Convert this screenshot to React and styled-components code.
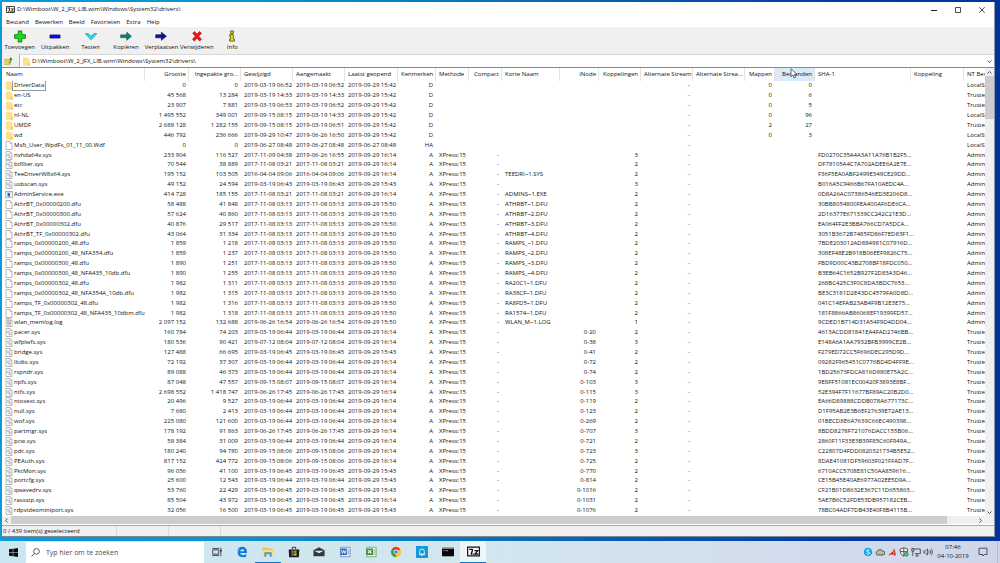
import styled, { createGlobalStyle, css } from 'styled-components';
import { useState } from 'react';

const GlobalStyle = createGlobalStyle`
  * {
    box-sizing: border-box;
  }
  body {
    margin: 0;
    font-family: 'Open Sans', 'Noto Sans', sans-serif;
    font-size: 6px;
    line-height: 9px;
    color: #111;
  }
  button,
  input {
    font: inherit;
    color: inherit;
    border: none;
    background: none;
    padding: 0;
    margin: 0;
  }
`;

const Desktop = styled.div`
  height: 100vh;
  display: flex;
  flex-direction: column;
  background: linear-gradient(90deg, #0a9adb 0%, #0a92d2 25%, #0768b8 55%, #0338a2 85%, #02329c 100%);
`;

const Window = styled.main`
  flex: 1;
  min-height: 0;
  margin: 2px 5px 4px 2px;
  display: flex;
  flex-direction: column;
  background: #fff;
  border-right: 1px solid #8d99ad;
  border-bottom: 1px solid #7d8a94;
`;

const TitleBar = styled.header`
  height: 15px;
  display: flex;
  align-items: center;
  padding-left: 4px;
`;

const Title = styled.h1`
  flex: 1;
  margin: 0;
  padding-left: 2px;
  font-size: 6px;
  font-weight: 400;
`;

const WindowButton = styled.button`
  width: 24px;
  height: 15px;
  display: flex;
  align-items: center;
  justify-content: center;
`;

const MenuBar = styled.nav`
  height: 10px;
  display: flex;
  gap: 6px;
  padding-left: 4px;
`;

const ToolBar = styled.div`
  height: 26px;
  flex-shrink: 0;
  background: #f0f0f0;
`;

const Tools = styled.div`
  max-width: 248px;
  height: 100%;
  display: grid;
  grid-template-columns: repeat(7, minmax(0, 1fr));
`;

const ToolButton = styled.button`
  display: flex;
  flex-direction: column;
  align-items: center;
  padding-top: 3px;
  white-space: nowrap;
`;

const AddressBar = styled.div`
  height: 15px;
  flex-shrink: 0;
  display: flex;
  align-items: stretch;
  padding-top: 1px;
  background: #f0f0f0;
  border-bottom: 1px solid #8a8a8a;
`;

const UpButton = styled.button`
  width: 17px;
  display: flex;
  align-items: center;
  padding-left: 2px;
`;

const AddressBox = styled.label`
  flex: 1;
  display: flex;
  align-items: center;
  gap: 2px;
  padding: 0 2px;
  background: #fff;
  border-left: 1px solid #b4b4b4;
  border-top: 1px solid #d8d8d8;
`;

const AddressInput = styled.input`
  flex: 1;
  min-width: 0;
  outline: none;
`;

const Content = styled.div`
  flex: 1;
  min-height: 0;
  display: flex;
`;

const ListPane = styled.div`
  flex: 1;
  min-width: 0;
  overflow: hidden;
`;

const FileTable = styled.table`
  width: 100%;
  height: 100%;
  table-layout: fixed;
  border-collapse: separate;
  border-spacing: 0;
`;

const Col = styled.col`
  width: ${({ $width }) => ($width ? `${$width}px` : 'auto')};
`;

const cell = css`
  padding: 0 3px;
  white-space: nowrap;
  font-weight: 400;
  text-align: ${({ $right }) => ($right ? 'right' : 'left')};
`;

const HeadCell = styled.th`
  ${cell}
  position: relative;
  height: 13px;
  padding: 0 2px 0 3px;
  border-right: 1px solid #e4e4e4;
  background: ${({ $hot }) => ($hot ? '#d9ebf9' : '#fff')};
  &:first-child {
    padding-left: 4px;
  }
  &:last-child {
    border-right: none;
    padding-right: 0;
  }
`;

const Cell = styled.td`
  ${cell}
  &:last-child {
    padding-right: 0;
  }
`;

const NameCell = styled.div`
  display: flex;
  align-items: center;
  svg {
    flex-shrink: 0;
  }
`;

const FileName = styled.span`
  padding: 0 1px;
  outline: ${({ $focused }) => ($focused ? '1px solid #9a9a9a' : 'none')};
`;

const Pointer = styled.svg`
  position: absolute;
  left: 15px;
  top: 0;
`;

const VScroll = styled.div`
  width: 9px;
  display: flex;
  flex-direction: column;
  background: #f0f0f0;
`;

const HScroll = styled.div`
  height: 8px;
  flex-shrink: 0;
  display: flex;
  background: #f0f0f0;
  padding-right: 9px;
`;

const ScrollButton = styled.button`
  width: 9px;
  height: 8px;
  display: flex;
  align-items: center;
  justify-content: center;
`;

const Track = styled.div`
  flex: 1;
`;

const VThumb = styled.div`
  height: 10%;
  background: #cdcdcd;
`;

const HThumb = styled.div`
  width: 97%;
  height: 100%;
  background: #cdcdcd;
`;

const StatusBar = styled.footer`
  height: 11px;
  flex-shrink: 0;
  display: flex;
  align-items: center;
  margin-top: 1px;
  background: #f0f0f0;
  border-top: 1px solid #a8a8ae;
`;

const StatusCell = styled.span`
  width: ${({ $wide }) => ($wide ? '115px' : '52px')};
  height: 100%;
  padding: 1px;
  border-right: 1px solid #dcdcdc;
  white-space: nowrap;
`;

const TaskBar = styled.footer`
  height: 22px;
  flex-shrink: 0;
  display: flex;
  background: linear-gradient(90deg, #cbe7f1 0%, #d3e6ef 50%, #d2dcec 80%, #d0d6e9 100%);
`;

const StartButton = styled.button`
  width: 26px;
  display: flex;
  align-items: center;
  justify-content: center;
`;

const SearchBox = styled.label`
  width: 178px;
  margin-top: 1px;
  display: flex;
  align-items: center;
  gap: 6px;
  padding-left: 5px;
  background: #fff;
`;

const SearchInput = styled.input`
  flex: 1;
  min-width: 0;
  font-size: 7px;
  outline: none;
  &::placeholder {
    color: #4c4c4c;
    opacity: 1;
  }
`;

const Apps = styled.div`
  width: 282px;
  display: grid;
  grid-template-columns: repeat(11, minmax(0, 1fr));
`;

const AppButton = styled.button`
  display: flex;
  align-items: center;
  justify-content: center;
  background: ${({ $active }) => ($active ? '#edf6f9' : 'none')};
  border-bottom: 1px solid ${({ $running }) => ($running ? '#0a78d0' : 'transparent')};
`;

const Tray = styled.div`
  margin-left: auto;
  display: flex;
  align-items: center;
  gap: 2px;
`;

const TrayButton = styled.button`
  display: flex;
`;

const Clock = styled.time`
  width: 36px;
  text-align: center;
`;

const NotificationButton = styled.button`
  width: 25px;
  height: 100%;
  display: flex;
  align-items: center;
  padding-left: 5px;
  border-right: 1px solid #b4bccb;
  margin-right: 2px;
`;

const menus = ['Bestand', 'Bewerken', 'Beeld', 'Favorieten', 'Extra', 'Help'];

const columns = [
  { label: 'Naam', width: 143 },
  { label: 'Grootte', width: 44, right: true },
  { label: 'Ingepakte gro...', width: 52, right: true },
  { label: 'Gewijzigd', width: 52 },
  { label: 'Aangemaakt', width: 52 },
  { label: 'Laatst geopend', width: 53 },
  { label: 'Kenmerken', width: 38, right: true },
  { label: 'Methode', width: 33 },
  { label: 'Compact', width: 33, right: true },
  { label: 'Korte Naam', width: 58 },
  { label: 'iNode', width: 39, right: true },
  { label: 'Koppelingen', width: 42, right: true },
  { label: 'Alternate Stream', width: 52, right: true },
  { label: 'Alternate Strea...', width: 52, right: true },
  { label: 'Mappen', width: 30, right: true },
  { label: 'Bestanden', width: 40, right: true, hot: true },
  { label: 'SHA-1', width: 96 },
  { label: 'Koppeling', width: 53 },
  { label: 'NT Bev' },
];

const folder = (name, size, packed, modified, created, dirs, files, owner) => ({
  icon: 'folder',
  name,
  cells: [size, packed, modified, created, '2019-09-29 15:42', 'D', '', '', '', '', '', '-', '', dirs, files, '', '', owner],
});

const file = (icon, name, size, packed, modified, created, accessed, short, inode, links, sha, owner = 'Trusted') => ({
  icon,
  name,
  cells: [size, packed, modified, created, `2019-09-29 ${accessed}`, 'A', 'XPress:15', '-', short, inode, links, '-', '', '', '', `${sha}...`, '', owner],
});

const dfu = (name, size, packed, short, sha) =>
  file('doc', name, size, packed, '2017-11-08 03:13', '2017-11-08 03:13', '15:50', short, '', '2', sha, 'Admin');

const sys = (name, size, packed, date, accessed, inode, links, sha) =>
  file('sys', name, size, packed, date, date, accessed, '', inode, links, sha);

const rows = [
  folder('DriverData', '0', '0', '2019-03-19 06:52', '2019-03-19 06:52', '0', '0', 'LocalS'),
  folder('en-US', '45 568', '13 284', '2019-03-19 14:33', '2019-03-19 14:33', '0', '6', 'Trusted'),
  folder('etc', '23 907', '7 881', '2019-03-19 06:53', '2019-03-19 06:52', '0', '5', 'Trusted'),
  folder('nl-NL', '1 495 552', '349 001', '2019-09-15 08:15', '2019-03-19 14:33', '0', '96', 'LocalS'),
  folder('UMDF', '2 688 128', '1 282 155', '2019-09-15 08:15', '2019-03-19 06:51', '2', '27', 'Trusted'),
  folder('wd', '446 792', '236 666', '2019-09-29 10:47', '2019-06-26 16:50', '0', '3', 'LocalS'),
  {
    icon: 'doc',
    name: 'Msft_User_WpdFs_01_11_00.Wdf',
    cells: ['0', '0', '2019-06-27 08:48', '2019-06-27 08:48', '2019-06-27 08:48', 'HA', '', '', '', '', '', '-', '', '', '', '', '', 'LocalS'],
  },
  file('sys', 'nvhda64v.sys', '233 904', '116 527', '2017-11-09 04:38', '2019-06-26 16:55', '16:14', '', '', '3', 'FD0270C35A4A3A11A76B1B2F5', 'Admin'),
  file('sys', 'btfilter.sys', '70 544', '38 889', '2017-11-08 03:21', '2017-11-08 03:21', '16:14', '', '', '2', 'DF78105A4C7A702ADEE6A2E7E', 'Admin'),
  file('sys', 'TeeDriverW8x64.sys', '195 152', '103 505', '2016-04-04 09:06', '2016-04-04 09:06', '16:14', 'TEEDRI~1.SYS', '', '2', 'F36F5EA0ABF2499E349CE29DD', 'Admin'),
  file('sys', 'usbscan.sys', '49 152', '24 594', '2019-03-19 06:43', '2019-03-19 06:43', '15:43', '', '', '3', 'B016A5C9466B67FA10AEDC4A', 'Admin'),
  file('exe', 'AdminService.exe', '414 728', '185 155', '2017-11-08 03:21', '2017-11-08 03:21', '16:14', 'ADMINS~1.EXE', '', '2', '0D8A26AC07386546ED3E206D8', 'Admin'),
  dfu('AthrBT_0x00000200.dfu', '58 488', '41 848', 'ATHRBT~1.DFU', '30BB8054800FEA400AF6DE6CA'),
  dfu('AthrBT_0x00000300.dfu', '57 624', '40 860', 'ATHRBT~2.DFU', '2D16377E671339CC242C21E3D'),
  dfu('AthrBT_0x00000302.dfu', '40 876', '29 517', 'ATHRBT~3.DFU', 'EA064FF2E3BBA766CD7A5DCA'),
  dfu('AthrBT_TF_0x00000302.dfu', '43 064', '31 334', 'ATHRBT~4.DFU', '3051B3672B7485FD86F7ED83F1'),
  dfu('ramps_0x00000200_48.dfu', '1 859', '1 218', 'RAMPS_~1.DFU', '7BDE203012AD884981C07916D'),
  dfu('ramps_0x00000200_48_NFA354.dfu', '1 859', '1 237', 'RAMPS_~2.DFU', '308EF48E2B918B06EEF9826C75'),
  dfu('ramps_0x00000300_48.dfu', '1 890', '1 251', 'RAMPS_~3.DFU', 'FBD9D00C43B2708BF18FDC050'),
  dfu('ramps_0x00000300_48_NFA435_10db.dfu', '1 890', '1 255', 'RAMPS_~4.DFU', 'B3EB64C1652B927F2D83A3D46'),
  dfu('ramps_0x00000302_48.dfu', '1 982', '1 311', 'RA20C1~1.DFU', '268BC425C3F0C8DA3BDC7653'),
  dfu('ramps_0x00000302_48_NFA354A_10db.dfu', '1 982', '1 315', 'RA38CF~1.DFU', 'BE3C3181D2E43DC4579FA0D8D'),
  dfu('ramps_TF_0x00000302_48.dfu', '1 982', '1 316', 'RA8FD5~1.DFU', '041C14EFAB23AB4F9B12E3E75'),
  dfu('ramps_TF_0x00000302_48_NFA435_10dbm.dfu', '1 982', '1 318', 'RA1574~1.DFU', '181F8866AB86068EF19399FD57'),
  file('log', 'wlan_memlog.log', '2 097 152', '132 688', '2019-06-26 16:54', '2019-06-26 16:54', '15:50', 'WLAN_M~1.LOG', '', '1', '9CDED1B714D31A54F9D4DD04', 'Admin'),
  sys('pacer.sys', '160 784', '74 203', '2019-03-19 06:44', '16:14', '0-20', '2', '4613ACDD81841EA4FAD2746BB'),
  sys('wfplwfs.sys', '180 536', '90 421', '2019-07-12 08:04', '16:14', '0-38', '3', 'E148A6A1AA7932BFB3999CE2B'),
  sys('bridge.sys', '127 488', '66 695', '2019-03-19 06:45', '15:43', '0-41', '2', 'F279ED72CC5F696DEC295D9D'),
  sys('lltdio.sys', '72 192', '37 307', '2019-03-19 06:44', '16:14', '0-72', '2', '09282F965451C0776BD4D4FF9E'),
  sys('rspndr.sys', '89 088', '46 373', '2019-03-19 06:44', '16:14', '0-74', '2', '1BD25673FDCA816D980E75A2C'),
  sys('npfs.sys', '87 048', '47 557', '2019-09-15 08:07', '16:14', '0-103', '3', '9E8FF51081EC00420F3893E8BF'),
  sys('ntfs.sys', '2 698 552', '1 418 747', '2019-06-26 17:45', '16:14', '0-115', '3', '52E394F7F11677BF89AC20B2D0'),
  sys('ntosext.sys', '20 496', '9 527', '2019-03-19 06:44', '16:14', '0-119', '2', 'EA66D89888CDDB078A677173C'),
  sys('null.sys', '7 680', '2 413', '2019-03-19 06:44', '16:14', '0-123', '2', 'D1F95AB2E3B6EF27639E72AE13'),
  sys('wof.sys', '225 080', '121 600', '2019-03-19 06:44', '16:14', '0-269', '2', '01BECD8E6A7639C66EC490398'),
  sys('partmgr.sys', '178 192', '91 863', '2019-06-26 17:45', '16:14', '0-707', '3', '8BDD8278F721076DACC155B06'),
  sys('pcw.sys', '58 384', '31 009', '2019-03-19 06:44', '16:14', '0-721', '2', '2860F11F33E3B39F85C60F949A'),
  sys('pdc.sys', '180 240', '94 780', '2019-09-15 08:06', '16:14', '0-723', '3', 'C22807D4FDD0820321734B5E52'),
  sys('PEAuth.sys', '817 152', '424 772', '2019-09-15 08:06', '16:14', '0-725', '2', '8DAE41081DF59603F021FFAD7F'),
  sys('PktMon.sys', '96 056', '41 100', '2019-03-19 06:45', '15:43', '0-770', '2', '6710ACC5708E81C50AA859616'),
  sys('portcfg.sys', '25 600', '12 543', '2019-03-19 06:44', '15:43', '0-814', '2', 'CE15B45E40AE6977A02EE5D9A'),
  sys('qwavedrv.sys', '53 760', '22 429', '2019-03-19 06:45', '15:43', '0-1016', '2', 'CF21B01D8632E367C11D655863'),
  sys('rassstp.sys', '85 504', '43 972', '2019-03-19 06:45', '16:14', '0-1031', '2', '5AE7B6C52FDE53DB957182CEB'),
  sys('rdpvideominiport.sys', '32 056', '16 500', '2019-03-19 06:45', '15:43', '0-1076', '2', '78BC04ADF7DB43E40F8B4115B'),
];

const Page = ({ children }) => (
  <svg width="8" height="9" viewBox="0 0 8 9" aria-hidden="true">
    <path d="M1 .5h4l2 2v6H1z" fill="#fff" stroke="#9c9c9c" strokeWidth=".7" />
    <path d="M5 .5v2h2" fill="none" stroke="#9c9c9c" strokeWidth=".6" />
    {children}
  </svg>
);

const FileIcon = ({ type }) => {
  if (type === 'folder') {
    return (
      <svg width="8" height="9" viewBox="0 0 8 9" aria-hidden="true">
        <path d="M1 .4h4.200l.6 1h1.700v7.300H1z" fill="#ffe08a" />
        <path d="M5.500 6.200l2.400-.8v3.300H5.500z" fill="#f7cf62" />
      </svg>
    );
  }
  if (type === 'exe') {
    return (
      <svg width="8" height="9" viewBox="0 0 8 9" aria-hidden="true">
        <path d="M.4 1.6h7.2v6H.4z" fill="#f5f8fb" stroke="#8e99a5" strokeWidth=".7" />
        <path d="M.4 1.3h7.2v1H.4z" fill="#a0abb8" />
        <path d="M2.5 3h2.6v3.6H2.5z" fill="#1576d2" />
      </svg>
    );
  }
  if (type === 'log') {
    return (
      <Page>
        <path d="M2 3h4M2 4.3h4M2 5.6h4M2 7h4M2 2h2" stroke="#8a8a8a" strokeWidth=".7" />
      </Page>
    );
  }
  if (type === 'sys') {
    return (
      <Page>
        <circle cx="3.300" cy="4" r="1.200" fill="#d6e6ef" stroke="#8fabbc" strokeWidth=".6" />
        <circle cx="5" cy="6" r="1.200" fill="#d6e6ef" stroke="#9db3c0" strokeWidth=".6" />
      </Page>
    );
  }
  return <Page />;
};

const SevenZip = ({ width, height }) => (
  <svg width={width} height={height} viewBox="0 0 14 11" aria-hidden="true">
    <path d="M.7.7h12.6v9.6H.7z" fill="#fff" stroke="#111" strokeWidth="1.300" />
    <path d="M2.300 3.200h3.500v1.300L4.300 9" fill="none" stroke="#111" strokeWidth="1.500" />
    <path d="M8 4.500h3.500L8.500 8.200h3.600" fill="none" stroke="#111" strokeWidth="1.400" />
    <path d="M6 7.500h1.300v1.500H6z" fill="#111" />
  </svg>
);

const tools = [
  {
    label: 'Toevoegen',
    art: <path d="M6.200 1h3.600v3.700h3.700v3.600H9.800V12H6.200V8.300H2.500V4.700h3.700z" fill="#18e018" stroke="#0a7a12" strokeWidth=".9" />,
  },
  { label: 'Uitpakken', art: <path d="M3 5h10v3H3z" fill="#1010f0" stroke="#00007c" strokeWidth=".8" /> },
  {
    label: 'Testen',
    art: <path d="M2.500 3.700h3L8 6.300l3-2.600h2.800L8 9.800z" fill="#27dfea" stroke="#0d8f98" strokeWidth=".7" />,
  },
  {
    label: 'Kopiëren',
    art: (
      <g fill="#0c8280" stroke="#064a4a" strokeWidth=".6">
        <path d="M2.700 4.800h1v3h-1zM4.500 4.800h1v3h-1zM6.400 4.800h2.400V2.300l4.600 4-4.600 4V7.800H6.400z" />
      </g>
    ),
  },
  {
    label: 'Verplaatsen',
    art: <path d="M2.700 4.800h5.700V2.300l5 4-5 4V7.800H2.700z" fill="#10109a" stroke="#000050" strokeWidth=".6" />,
  },
  {
    label: 'Verwijderen',
    art: (
      <path
        d="M3.700 3.200l1.800-1.700L8 4.200l2.500-2.700 2 1.700-2.800 3 2.800 3.100-1.900 1.800L8 8.300l-2.600 2.800-1.900-1.800 2.800-3.100z"
        fill="#f01414"
        stroke="#9a0808"
        strokeWidth=".6"
      />
    ),
  },
  {
    label: 'Info',
    art: (
      <path
        d="M6.700 1h2.600v2.400H6.700zM5.700 4.600h3.600v4.600h1.200v1.900h-5V9.200h1.200V6.400h-1z"
        fill="#f2e91c"
        stroke="#4c4800"
        strokeWidth=".8"
      />
    ),
  },
];

const apps = [
  {
    label: 'Taakweergave',
    art: (
      <g fill="none" stroke="#333" strokeWidth="1">
        <path d="M2 4.500h7v5H2zM2 2v1h7V2M2 12v-1h7v1M11.500 2v10" />
        <path d="M10.500 5.500h2" strokeWidth="2" />
      </g>
    ),
  },
  {
    label: 'Microsoft Edge',
    art: (
      <path
        d="M1.200 6.500C1.800 3 4.300 1 7.200 1c3.600 0 5.600 2.600 5.600 5.800v1.400H5c.2 1.700 1.600 2.500 3.400 2.500 1.300 0 2.500-.4 3.600-1v2.600c-1.100.6-2.400.9-4 .9C4.400 13.200 2 11 2 8c0-2 1-3.600 2.700-4.400C3 4 1.900 5.100 1.200 6.500zM5 6.100h4.600C9.600 4.700 8.900 3.800 7.500 3.800 6.100 3.800 5.200 4.700 5 6.100z"
        fill="#0c7bdc"
      />
    ),
  },
  {
    label: 'Verkenner',
    running: true,
    art: (
      <g>
        <path d="M1 2h5l1 1.300h6v8.200H1z" fill="#f4bd3c" />
        <path d="M1 4.500h12v7H1z" fill="#ffdd77" />
        <path d="M2.800 7.200h8.400v5.300H9V9.400H5v3.100H2.800z" fill="#3f98dc" />
      </g>
    ),
  },
  {
    label: 'Microsoft Store',
    art: (
      <g>
        <path d="M5 4V1.500h4V4" fill="none" stroke="#1b1b1b" strokeWidth="1" />
        <path d="M.8 4h12.400l-.5 9H1.300z" fill="#1b1b1b" />
        <path d="M4 5.300h2.700V8H4z" fill="#f25022" />
        <path d="M7.300 5.300H10V8H7.300z" fill="#7fba00" />
        <path d="M4 8.600h2.700v2.700H4z" fill="#00a4ef" />
        <path d="M7.300 8.600H10v2.700H7.300z" fill="#ffb900" />
      </g>
    ),
  },
  {
    label: 'Mail',
    art: (
      <g>
        <path d="M.5 5L7 1.500 13.500 5v7H.5z" fill="#33383d" />
        <path d="M1.500 5.500h11L7 8.600z" fill="#dceaf0" />
      </g>
    ),
  },
  {
    label: 'Word',
    art: (
      <g>
        <path d="M2 1.500h11v11H2z" fill="#e4ecf8" stroke="#5c7cb8" strokeWidth=".8" />
        <path d="M1.500 3h8v7.500h-8z" fill="#3f68b4" />
        <path d="M2.800 4.700l1.200 4 1.500-3.500L7 8.700l1.300-4" fill="none" stroke="#fff" strokeWidth="1" />
        <path d="M10.500 5h1.500M10.500 7h1.500M10.500 9h1.500" stroke="#5c7cb8" strokeWidth=".8" />
      </g>
    ),
  },
  {
    label: 'Excel',
    art: (
      <g>
        <path d="M2 1.500h11v11H2z" fill="#e4f3e2" stroke="#569a50" strokeWidth=".8" />
        <path d="M1.500 3h8v7.500h-8z" fill="#3d8c42" />
        <path d="M3.500 4.700l4 4M7.500 4.700l-4 4" stroke="#fff" strokeWidth="1.200" />
        <path d="M10.500 5h1.500M10.500 7h1.500M10.500 9h1.500" stroke="#569a50" strokeWidth=".8" />
      </g>
    ),
  },
  {
    label: 'Chrome',
    art: (
      <g>
        <path d="M7 7L1.800 4A6 6 0 0 1 12.200 4z" fill="#e23b2e" />
        <path d="M7 7L1.800 4A6 6 0 0 0 7 13z" fill="#2da04c" />
        <path d="M7 7l5.200-3A6 6 0 0 1 7 13z" fill="#f9c91f" />
        <circle cx="7" cy="7" r="2.800" fill="#fff" />
        <circle cx="7" cy="7" r="2.100" fill="#3f80ea" />
      </g>
    ),
  },
  {
    label: 'Meldingen',
    art: (
      <g>
        <path d="M0 0h14v14H0z" fill="#139ad8" />
        <path d="M4.300 9.500V6.200a2.700 2.700 0 0 1 5.400 0v3.300zM3.500 9.700h7M6 11h2" fill="none" stroke="#fff" strokeWidth=".9" />
      </g>
    ),
  },
  {
    label: 'Opdrachtprompt',
    art: (
      <g>
        <path d="M0 2h14v10H0z" fill="#0a0a0a" />
        <path d="M0 2h14v1.300H0z" fill="#9a9a9a" />
        <path d="M1.500 5.500H3M4 5.500h3" stroke="#d0d0d0" strokeWidth=".8" />
      </g>
    ),
  },
  { label: '7-Zip', running: true, active: true },
];

const trayIcons = [
  {
    label: 'Skype',
    art: (
      <g>
        <circle cx="5" cy="5" r="4.300" fill="#12a5e8" />
        <path d="M6.700 3.600C6 2.500 3.600 2.600 3.600 3.900c0 1.500 3.100.8 3.100 2.300 0 1.300-2.700 1.400-3.300.1" fill="none" stroke="#fff" />
      </g>
    ),
  },
  {
    label: 'OneDrive',
    art: <path d="M2.300 8A1.800 1.800 0 0 1 2 4.700 3 3 0 0 1 7.400 4 2 2 0 0 1 8 8z" fill="#b9b9b4" stroke="#3c3c3c" strokeWidth=".8" />,
  },
  {
    label: 'Grafisch',
    art: (
      <g>
        <path d="M1 8.500l4.800-4L7 8.500l-2-1.200z" fill="#e01818" />
        <path d="M6 4l1.500-2.500L9 8.500H7.400z" fill="#f03030" />
        <path d="M5.200 4.500L7.400 1.500v3z" fill="#34c43a" />
      </g>
    ),
  },
  {
    label: 'Beveiliging',
    art: (
      <g>
        <path d="M4.800.8l3.700 1.300c0 3.700-.9 5.700-3.700 7C2 7.800 1.100 5.800 1.100 2.100z" fill="#fff" stroke="#333" strokeWidth=".8" />
        <path d="M4.800 1v8M1.300 4.600h7" stroke="#333" strokeWidth=".8" />
        <circle cx="7.200" cy="7.200" r="2.300" fill="#21a34a" />
        <path d="M6.100 7.200l.8.9 1.400-1.600" fill="none" stroke="#fff" strokeWidth=".6" />
      </g>
    ),
  },
  {
    label: 'Netwerk',
    art: <path d="M2.700 2h6.600v4.700H4M6 6.700V9M4.300 9h3.400M.8 1.500h2v2.700h-2zM1.800 4.200V9" fill="none" stroke="#333" strokeWidth=".8" />,
  },
  {
    label: 'Volume',
    art: (
      <path
        d="M.8 3.900h1.500L4.500 2v6L2.300 6.100H.8zM5.800 3.700c.6.800.6 1.800 0 2.600M7 2.700c1.100 1.400 1.100 3.200 0 4.600M8.300 1.900c1.600 1.900 1.600 4.300 0 6.200"
        fill="none"
        stroke="#333"
        strokeWidth=".7"
      />
    ),
  },
];

const Arrow = ({ d }) => (
  <svg width="5" height="5" viewBox="0 0 5 5" aria-hidden="true">
    <path d={d} fill="none" stroke="#505050" strokeWidth="1" />
  </svg>
);

function FileList() {
  return (
    <FileTable>
      <colgroup>
        {columns.map((col, i) => (
          <Col key={i} $width={col.width} />
        ))}
      </colgroup>
      <thead>
        <tr>
          {columns.map((col, i) => (
            <HeadCell key={i} $right={col.right} $hot={col.hot}>
              {col.label}
              {col.hot && (
                <Pointer width="8" height="12" viewBox="0 0 8 12" aria-hidden="true">
                  <path d="M1 .7v8l1.900-1.700 1.300 3 1.400-.6-1.300-2.900H7z" fill="#fff" stroke="#333" strokeWidth=".7" />
                </Pointer>
              )}
            </HeadCell>
          ))}
        </tr>
      </thead>
      <tbody>
        {rows.map((row, i) => (
          <tr key={row.name}>
            <Cell>
              <NameCell>
                <FileIcon type={row.icon} />
                <FileName $focused={i === 0}>{row.name}</FileName>
              </NameCell>
            </Cell>
            {row.cells.map((value, c) => (
              <Cell key={c} $right={columns[c + 1].right}>
                {value}
              </Cell>
            ))}
          </tr>
        ))}
      </tbody>
    </FileTable>
  );
}

export default function App() {
  const [path, setPath] = useState('D:\\Wimboot\\W_2_JFX_LIB.wim\\Windows\\System32\\drivers\\');
  const [search, setSearch] = useState('');

  return (
    <>
      <GlobalStyle />
      <Desktop>
        <Window>
          <TitleBar>
            <SevenZip width={9} height={7} />
            <Title>{'D:\\Wimboot\\W_2_JFX_LIB.wim\\Windows\\System32\\drivers\\'}</Title>
            <WindowButton aria-label="Minimaliseren">
              <svg width="6" height="6" viewBox="0 0 6 6">
                <path d="M0 3.500h6" stroke="#222" />
              </svg>
            </WindowButton>
            <WindowButton aria-label="Maximaliseren">
              <svg width="6" height="6" viewBox="0 0 6 6">
                <path d="M.5.5h5v5h-5z" fill="none" stroke="#222" strokeWidth=".8" />
              </svg>
            </WindowButton>
            <WindowButton aria-label="Sluiten">
              <svg width="6" height="6" viewBox="0 0 6 6">
                <path d="M.3.3l5.400 5.400M5.700.3L.3 5.700" stroke="#222" strokeWidth=".8" />
              </svg>
            </WindowButton>
          </TitleBar>
          <MenuBar>
            {menus.map((menu) => (
              <button key={menu}>{menu}</button>
            ))}
          </MenuBar>
          <ToolBar>
            <Tools>
              {tools.map((tool) => (
                <ToolButton key={tool.label}>
                  <svg width="16" height="13" viewBox="0 0 16 13" aria-hidden="true">
                    {tool.art}
                  </svg>
                  {tool.label}
                </ToolButton>
              ))}
            </Tools>
          </ToolBar>
          <AddressBar>
            <UpButton aria-label="Map omhoog">
              <svg width="9" height="9" viewBox="0 0 9 9">
                <path d="M.8 3h2.600l.6.800h2.500V8.500H.8z" fill="#f3cf5c" stroke="#b08a20" strokeWidth=".4" />
                <path d="M4.500 6.800c1.500-.4 1.700-1.500 1.600-3H4.800L7 1l1.500 2.800H7.400c.1 2-.7 3.500-2.900 3.700z" fill="#2f9b2c" />
              </svg>
            </UpButton>
            <AddressBox>
              <FileIcon type="folder" />
              <AddressInput aria-label="Pad" value={path} onChange={(e) => setPath(e.target.value)} />
              <Arrow d="M.8 1.500l1.700 2 1.700-2" />
            </AddressBox>
          </AddressBar>
          <Content>
            <ListPane>
              <FileList />
            </ListPane>
            <VScroll>
              <ScrollButton aria-label="Omhoog">
                <Arrow d="M.5 3.500l2-2 2 2" />
              </ScrollButton>
              <Track>
                <VThumb />
              </Track>
              <ScrollButton aria-label="Omlaag">
                <Arrow d="M.5 1.500l2 2 2-2" />
              </ScrollButton>
            </VScroll>
          </Content>
          <HScroll>
            <ScrollButton aria-label="Links">
              <Arrow d="M3.500.5l-2 2 2 2" />
            </ScrollButton>
            <Track>
              <HThumb />
            </Track>
            <ScrollButton aria-label="Rechts">
              <Arrow d="M1.500.5l2 2-2 2" />
            </ScrollButton>
          </HScroll>
          <StatusBar>
            <StatusCell $wide>0 / 439 item(s) geselecteerd</StatusCell>
            <StatusCell />
            <StatusCell />
          </StatusBar>
        </Window>
        <TaskBar>
          <StartButton aria-label="Start">
            <svg width="9" height="9" viewBox="0 0 18 18">
              <path d="M0 2.500L7.500 1.500v7H0zM8.500 1.300L18 0v8.500H8.500zM0 9.500h7.500v7L0 15.500zM8.500 9.500H18V18l-9.500-1.300z" fill="#0a0a0a" />
            </svg>
          </StartButton>
          <SearchBox>
            <svg width="9" height="9" viewBox="0 0 9 9" aria-hidden="true">
              <circle cx="5.500" cy="3.400" r="2.800" fill="none" stroke="#333" strokeWidth=".8" />
              <path d="M3.500 5.400L.5 8.500" stroke="#333" strokeWidth=".8" />
            </svg>
            <SearchInput
              aria-label="Zoeken"
              placeholder="Typ hier om te zoeken"
              value={search}
              onChange={(e) => setSearch(e.target.value)}
            />
          </SearchBox>
          <Apps>
            {apps.map((app) => (
              <AppButton key={app.label} aria-label={app.label} $active={app.active} $running={app.running}>
                {app.art ? (
                  <svg width="12" height="12" viewBox="0 0 14 14">
                    {app.art}
                  </svg>
                ) : (
                  <SevenZip width={13} height={11} />
                )}
              </AppButton>
            ))}
          </Apps>
          <Tray>
            {trayIcons.map((icon) => (
              <TrayButton key={icon.label} aria-label={icon.label}>
                <svg width="10" height="10" viewBox="0 0 10 10">
                  {icon.art}
                </svg>
              </TrayButton>
            ))}
            <Clock>
              <div>07:46</div>
              <div>04-10-2019</div>
            </Clock>
            <NotificationButton aria-label="Meldingencentrum">
              <svg width="10" height="10" viewBox="0 0 10 10">
                <path d="M1 1.200h8v6.300H6.500L5 9 4.800 7.500H1z" fill="none" stroke="#333" strokeWidth=".8" />
              </svg>
            </NotificationButton>
          </Tray>
        </TaskBar>
      </Desktop>
    </>
  );
}
